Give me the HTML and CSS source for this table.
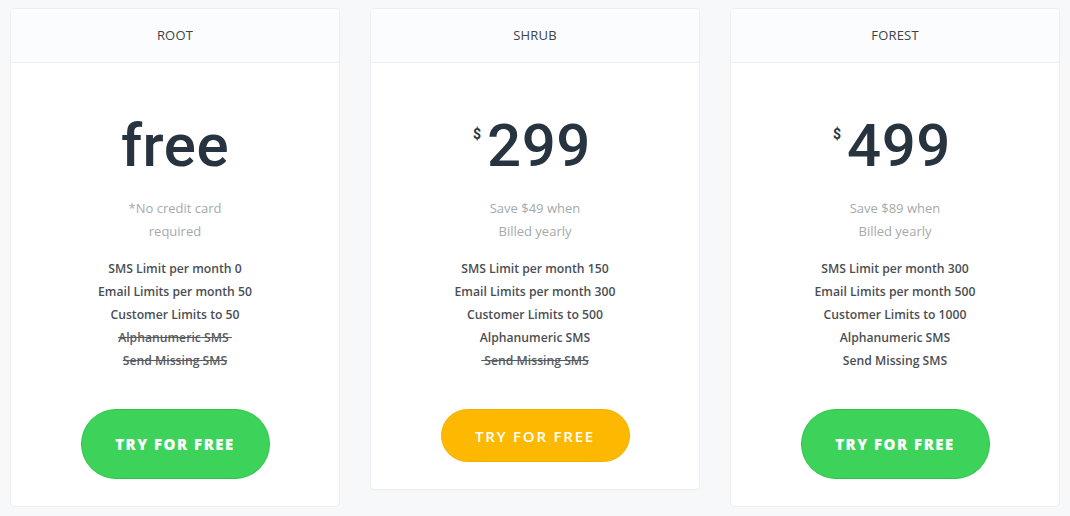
FILE: index.html
```html
<!DOCTYPE html>
<html>
<head>
<meta charset="utf-8">
<link rel="stylesheet" href="styles.css">
</head>
<body>
<div class="plans">
  <div class="card">
    <div class="card-head">ROOT</div>
    <div class="card-body">
      <div class="price"><span class="amount">free</span></div>
      <div class="note">*No credit card<br>required</div>
      <ul class="features">
        <li>SMS Limit per month 0</li>
        <li>Email Limits per month 50</li>
        <li>Customer Limits to 50</li>
        <li><s>Alphanumeric SMS&nbsp;</s></li>
        <li><s>Send Missing SMS</s></li>
      </ul>
      <button class="btn btn-green">TRY FOR FREE</button>
    </div>
  </div>
  <div class="card">
    <div class="card-head">SHRUB</div>
    <div class="card-body">
      <div class="price"><span class="currency">$</span><span class="amount">299</span></div>
      <div class="note">Save $49 when<br>Billed yearly</div>
      <ul class="features">
        <li>SMS Limit per month 150</li>
        <li>Email Limits per month 300</li>
        <li>Customer Limits to 500</li>
        <li>Alphanumeric SMS</li>
        <li><s>&nbsp;Send Missing SMS</s></li>
      </ul>
      <button class="btn btn-orange">TRY FOR FREE</button>
    </div>
  </div>
  <div class="card">
    <div class="card-head">FOREST</div>
    <div class="card-body">
      <div class="price"><span class="currency">$</span><span class="amount">499</span></div>
      <div class="note">Save $89 when<br>Billed yearly</div>
      <ul class="features">
        <li>SMS Limit per month 300</li>
        <li>Email Limits per month 500</li>
        <li>Customer Limits to 1000</li>
        <li>Alphanumeric SMS</li>
        <li>Send Missing SMS</li>
      </ul>
      <button class="btn btn-green">TRY FOR FREE</button>
    </div>
  </div>
</div>
</body>
</html>
```

FILE: styles.css
```css
html, body {
  margin: 0;
  padding: 0;
  background: #f7f8f9;
  font-family: "Open Sans", "Liberation Sans", sans-serif;
}
.plans {
  display: flex;
  align-items: flex-start;
  gap: 30px;
  padding: 8px 10px;
}
.card {
  width: 330px;
  box-sizing: border-box;
  background: #fff;
  border: 1px solid #eceef0;
  border-radius: 4px;
  overflow: hidden;
}
.card-head {
  height: 54px;
  box-sizing: border-box;
  padding-bottom: 2px;
  background: #fafcfd;
  border-bottom: 1px solid #eff1f3;
  display: flex;
  align-items: center;
  justify-content: center;
  font-size: 13px;
  color: #3f4347;
  letter-spacing: 0.2px;
}
.card-body {
  display: flex;
  flex-direction: column;
  align-items: center;
  padding: 51px 0 27px;
}
.price {
  display: flex;
  align-items: flex-start;
  justify-content: center;
  height: 64px;
  color: #283340;
  font-family: "Roboto", "Inter", sans-serif;
}
.amount {
  font-size: 60px;
  line-height: 64px;
  font-weight: 500;
  letter-spacing: 0.5px;
}
.currency {
  font-size: 14px;
  font-weight: 700;
  line-height: 14px;
  margin-top: 13px;
  margin-right: 6px;
  margin-left: -6px;
}
.note {
  margin-top: 19px;
  font-size: 13px;
  line-height: 23px;
  color: #a5a9ad;
  text-align: center;
}
.features {
  list-style: none;
  margin: 14px 0 0;
  padding: 0;
  text-align: center;
  font-size: 12.2px;
  line-height: 23px;
  font-weight: 600;
  color: #4b4f54;
}
.features s {
  color: #585c61;
}
.btn {
  margin-top: 37px;
  width: 189px;
  border-radius: 36px;
  font-family: "Open Sans", "Liberation Sans", sans-serif;
  color: #fff;
  font-size: 15px;
  letter-spacing: 1.5px;
  cursor: pointer;
}
.btn-green {
  height: 70px;
  background: #3dd35b;
  border: 1px solid #2cc44a;
  font-weight: 800;
}
.btn-orange {
  height: 53px;
  background: #fdb901;
  border: 1px solid #f2b005;
  font-weight: 600;
  letter-spacing: 1.8px;
}
```
